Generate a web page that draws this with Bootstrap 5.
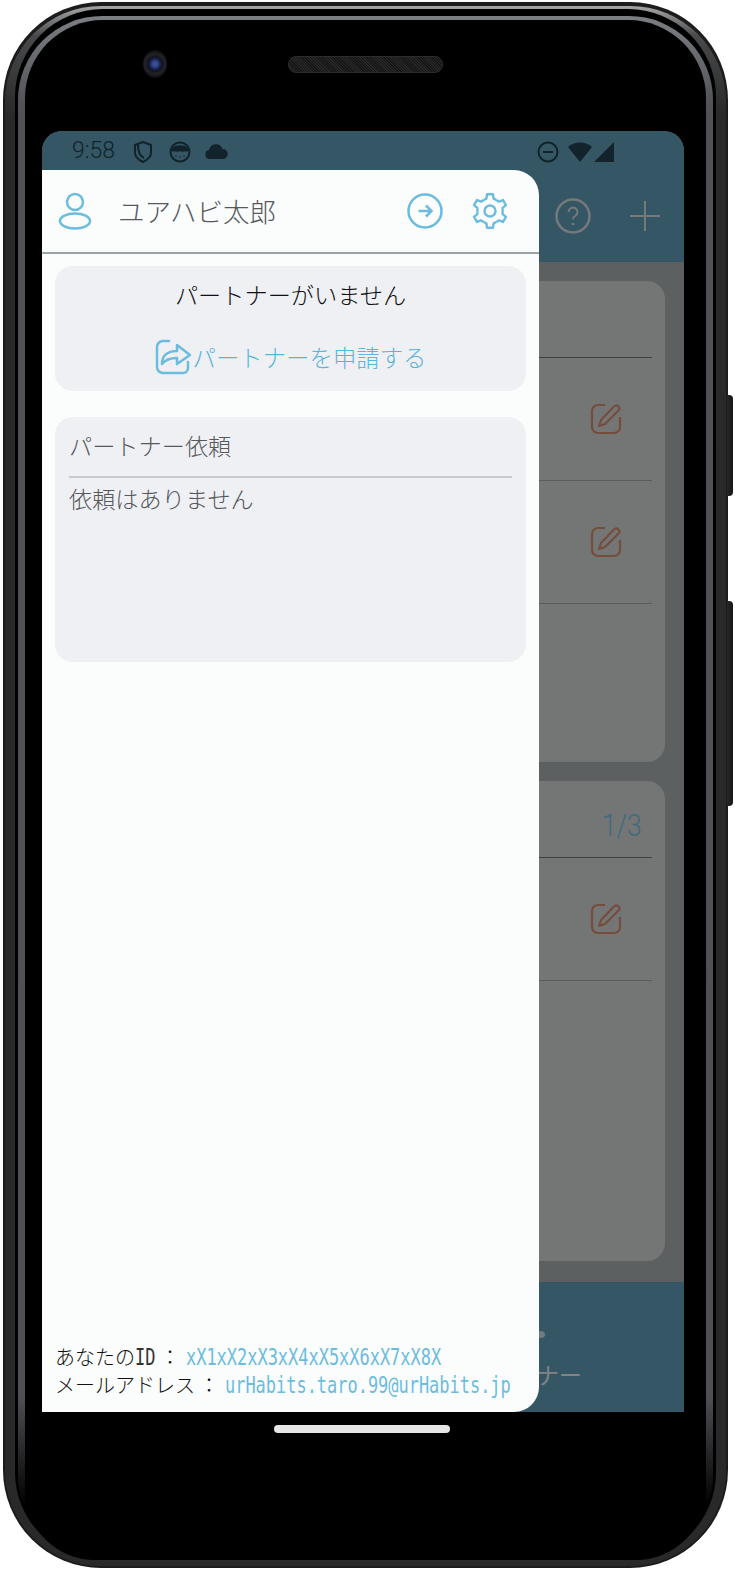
<!DOCTYPE html>
<html lang="ja">
<head>
<meta charset="utf-8">
<title>urHabits</title>
<link href="https://cdn.jsdelivr.net/npm/bootstrap@5.3.0/dist/css/bootstrap.min.css" rel="stylesheet">
<style>
html,body{margin:0;background:#fff;}
body{width:735px;height:1570px;overflow:hidden;font-family:"Noto Sans CJK JP","Noto Sans",sans-serif;}
.stage{position:relative;width:735px;height:1570px;padding:2px 7px 2px 3px;}
.sidekey{position:absolute;background:linear-gradient(90deg,#262628,#161617);border-radius:0 4px 4px 0;width:6px;right:2px;}
.key-a{top:395px;height:101px;}
.key-b{top:601px;height:205px;}
.rim-a{height:100%;background:#1c1c1d;border-radius:98px;padding:4px 2px 2px;}
.rim-b{height:100%;background:linear-gradient(180deg,#a4a6a8 0,#48494b 30px,#29292a 110px);border-radius:96px;padding:3px 10px 6px;}
.rim-c{height:100%;background:#000;border-radius:88px;padding:7px 3px 0;}
.rim-d{height:100%;background:linear-gradient(180deg,#7b7e82 0,#505257 90px,#4e5055 1380px,#000 1490px);border-radius:84px;padding:4px 7px 0;}
.phone-face{position:relative;height:100%;background:#000;border-radius:78px 78px 70px 70px;padding:111px 0 0 17px;}
.cam{position:absolute;left:118px;top:30px;width:24px;height:28px;border-radius:50%;background:radial-gradient(circle,#3d4f94 0 2px,#1a2557 5px,#10131f 7px,#232328 10px,#0b0b0b 14px);}
.speaker{position:absolute;left:263px;top:36px;width:155px;height:17px;border-radius:8px;background:repeating-linear-gradient(45deg,#262626 0 1px,#161616 1px 2px);border:1px solid #2c2c2c;}
.homebar{position:absolute;left:249px;top:1405px;width:176px;height:8px;border-radius:4px;background:#e6e6e6;}
.screen{position:relative;height:1281px;width:642px;border-radius:20px 20px 0 0;overflow:hidden;background:#5c6061;}
.statusbar{height:39px;background:#345665;color:#12232b;padding:2px 69px 0 30px;font-family:"Roboto",sans-serif;font-size:23px;font-weight:300;}
.appbar{height:92px;background:#345665;padding:0 24px 0 0;gap:39px;}
.appcontent{padding:19px 19px 0 0;gap:19px;height:1020px;}
.bgcard{background:#747675;border-radius:0 18px 18px 0;padding:0 13px 0 0;}
.bgcard-1{height:481px;}
.bgcard-2{height:480px;}
.bgrow{border-bottom:1px solid #5a5c5c;height:123px;padding-right:30px;}
.bgrow-head{height:77px;border-bottom:1px solid #3f4141;padding:14px 10px 0 0;color:#3f6a80;font-family:"Roboto",sans-serif;font-size:31px;font-weight:300;}
.page-count{display:inline-block;transform:scaleX(.85);transform-origin:right center;}
.tabbar{position:relative;height:130px;background:#345665;color:#7f8486;padding:77px 0 0 494px;font-size:23px;line-height:30px;}
.tabdot{position:absolute;left:494px;top:49px;width:9px;height:7px;border-radius:50%;background:#6f7b80;}
.drawer{position:absolute;left:0;top:39px;bottom:0;width:497px;background:#fbfcfc;border-radius:0 25px 25px 0;display:flex;flex-direction:column;}
.drawer-head{height:84px;border-bottom:2px solid #9aa3a8;padding:0 31px 0 16px;color:#55585c;font-size:26.5px;font-weight:300;}
.drawer-name{margin-left:26px;}
.gear-gap{margin-left:29px;}
.panel{background:#eff0f4;border-radius:18px;margin:0 13px;}
.panel-a{margin-top:12px;height:125px;color:#111113;font-size:23.2px;padding-top:11px;font-weight:300;}
.apply{color:#5cb4da;margin-top:27px;font-size:23.4px;line-height:36px;gap:2px;}
.panel-b{margin-top:26px;height:245px;padding:10px 14px;color:#55585c;font-size:23.2px;font-weight:300;}
.panel-title{height:51px;border-bottom:2px solid #c9cacc;line-height:36px;}
.panel-text{margin-top:2px;line-height:36px;}
.drawer-foot{margin-top:auto;padding:0 13px 13px;color:#111;font-size:20px;font-weight:300;line-height:28px;white-space:nowrap;}
.foot-row{display:flex;align-items:center;height:28px;}
.tall-mono{display:inline-block;font-family:"DejaVu Sans Mono",monospace;font-size:23px;transform:scaleX(.737);transform-origin:left center;}
.tall-short{width:21px;color:#333;}
.colon{width:20px;text-align:center;margin-left:4px;margin-right:6px;}
.mono-val{color:#6bbcdf;}
</style>
</head>
<body>
<div class="stage">
  <div class="sidekey key-a"></div>
  <div class="sidekey key-b"></div>
  <div class="rim-a"><div class="rim-b"><div class="rim-c"><div class="rim-d">
  <div class="phone-face">
    <div class="cam"></div>
    <div class="speaker"></div>
    <div class="homebar"></div>
    <div class="screen">
      <div class="statusbar d-flex align-items-center">
        <span>9:58</span>
        <svg style="margin-left:18px" width="20" height="24" viewBox="0 0 20 24" fill="none" stroke="#12232b" stroke-width="2" stroke-linejoin="round"><path d="M10 2 18 5v8c0 4-4 7-8 9-4-2-8-5-8-9V5z"/><path d="M5 5c0 6 2 11 6 13"/></svg>
        <svg style="margin-left:16px" width="22" height="22" viewBox="0 0 22 22" fill="none" stroke="#12232b" stroke-width="2"><circle cx="11" cy="11" r="9.500"/><path d="M3 9c3-5 13-5 16 0-2 1-3 .5-4 0-1 1-2 1-4 0-2 1-3 1-4 0-1 .5-2 1-4 0z" fill="#12232b"/><path d="M7 15h.01M11 16h.01M15 15h.01" stroke-width="1.500" stroke-linecap="round"/></svg>
        <svg style="margin-left:14px" width="23" height="15" viewBox="0 0 23 15" fill="#12232b"><path d="M5 15a4.500 4.500 0 0 1-1-8.900A7 7 0 0 1 17.500 5 5 5 0 0 1 18 15z"/></svg>
        <svg class="ms-auto" width="22" height="22" viewBox="0 0 22 22" fill="none" stroke="#12232b" stroke-width="2"><circle cx="11" cy="11" r="9.500"/><path d="M6 11h10"/></svg>
        <svg class="ms-2" width="26" height="22" viewBox="0 0 26 22" fill="#12232b"><path d="M1 6c6-6 18-6 24 0L13 21z"/></svg>
        <svg width="22" height="22" viewBox="0 0 22 22" fill="#12232b"><path d="M21 1v20H1z"/></svg>
      </div>
      <div class="appbar d-flex align-items-center justify-content-end">
        <svg width="36" height="36" viewBox="0 0 36 36" fill="none" stroke="#76797a" stroke-width="2.500"><circle cx="18" cy="18" r="16.500"/><path d="M13.500 14a4.500 4.500 0 1 1 6.700 4c-1.500.8-2.200 1.700-2.200 3.200" stroke-width="2"/><circle cx="18" cy="26" r=".6" stroke-width="1.500"/></svg>
        <svg width="30" height="30" viewBox="0 0 30 30" fill="none" stroke="#76797a" stroke-width="2"><path d="M15 0v30M0 15h30"/></svg>
      </div>
      <div class="appcontent d-flex flex-column">
        <div class="bgcard bgcard-1">
          <div class="bgrow-head d-flex align-items-center justify-content-end"></div>
          <div class="bgrow d-flex align-items-center justify-content-end"><svg width="32" height="32" viewBox="0 0 32 32" fill="none" stroke="#754d3d" stroke-width="2.200" stroke-linejoin="round"><path d="M15 2H8a6 6 0 0 0-6 6v16a6 6 0 0 0 6 6h16a6 6 0 0 0 6-6V14"/><path d="M9 23l2-6L24 3.500a2.800 2.800 0 0 1 4.500 4L15 21z"/></svg></div>
          <div class="bgrow d-flex align-items-center justify-content-end"><svg width="32" height="32" viewBox="0 0 32 32" fill="none" stroke="#754d3d" stroke-width="2.200" stroke-linejoin="round"><path d="M15 2H8a6 6 0 0 0-6 6v16a6 6 0 0 0 6 6h16a6 6 0 0 0 6-6V14"/><path d="M9 23l2-6L24 3.500a2.800 2.800 0 0 1 4.500 4L15 21z"/></svg></div>
        </div>
        <div class="bgcard bgcard-2">
          <div class="bgrow-head d-flex align-items-center justify-content-end"><span class="page-count">1/3</span></div>
          <div class="bgrow d-flex align-items-center justify-content-end"><svg width="32" height="32" viewBox="0 0 32 32" fill="none" stroke="#754d3d" stroke-width="2.200" stroke-linejoin="round"><path d="M15 2H8a6 6 0 0 0-6 6v16a6 6 0 0 0 6 6h16a6 6 0 0 0 6-6V14"/><path d="M9 23l2-6L24 3.500a2.800 2.800 0 0 1 4.500 4L15 21z"/></svg></div>
        </div>
      </div>
      <div class="tabbar"><span class="tabdot"></span>ナー</div>
      <div class="drawer">
        <div class="drawer-head d-flex align-items-center">
          <svg width="34" height="38" viewBox="0 0 34 38" fill="none" stroke="#6bbcdf" stroke-width="2.500"><circle cx="17" cy="10" r="8"/><ellipse cx="17" cy="29" rx="15" ry="7.500"/></svg>
          <span class="drawer-name">ユアハビ太郎</span>
          <svg class="ms-auto" width="36" height="36" viewBox="0 0 36 36" fill="none" stroke="#6bbcdf" stroke-width="2.500"><circle cx="18" cy="18" r="16.500"/><path d="M11.500 18h12.500M19 12.500l5.500 5.500-5.500 5.500"/></svg>
          <svg class="gear-gap" width="36" height="36" viewBox="0 0 36 36" fill="none" stroke="#6bbcdf" stroke-width="2.400" stroke-linejoin="round">
            <defs><path id="gear-tooth" d="M11.600 6.910Q13 6.600 14.400 5.500L15.050 1.260H20.950L21.580 5.500Q23 6.600 24.400 6.910"/></defs>
            <use href="#gear-tooth"/><use href="#gear-tooth" transform="rotate(60 18 18)"/><use href="#gear-tooth" transform="rotate(120 18 18)"/><use href="#gear-tooth" transform="rotate(180 18 18)"/><use href="#gear-tooth" transform="rotate(240 18 18)"/><use href="#gear-tooth" transform="rotate(300 18 18)"/>
            <circle cx="18" cy="18" r="5.500"/>
          </svg>
        </div>
        <div class="panel panel-a text-center">
          <div>パートナーがいません</div>
          <div class="apply d-flex align-items-center justify-content-center">
            <svg width="36" height="36" viewBox="0 0 36 36" fill="none" stroke="#6bbcdf" stroke-width="2.500" stroke-linejoin="round" stroke-linecap="round"><path d="M14 2H8a6 6 0 0 0-6 6v20a6 6 0 0 0 6 6h20a5 5 0 0 0 5-5v-6"/><path d="M7 25c0-8 5-13 15-13V6l13 10-13 9v-6c-6 0-11 1-15 6z"/></svg>
            <span>パートナーを申請する</span>
          </div>
        </div>
        <div class="panel panel-b">
          <div class="panel-title">パートナー依頼</div>
          <div class="panel-text">依頼はありません</div>
        </div>
        <div class="drawer-foot">
          <div class="foot-row"><span>あなたの</span><span class="tall-mono tall-short">ID</span><span class="colon">：</span><span class="tall-mono mono-val">xX1xX2xX3xX4xX5xX6xX7xX8X</span></div>
          <div class="foot-row"><span>メールアドレス</span><span class="colon">：</span><span class="tall-mono mono-val">urHabits.taro.99@urHabits.jp</span></div>
        </div>
      </div>
    </div>
  </div>
  </div></div></div></div>
</div>
<script src="https://cdn.jsdelivr.net/npm/bootstrap@5.3.0/dist/js/bootstrap.bundle.min.js"></script>
</body>
</html>
